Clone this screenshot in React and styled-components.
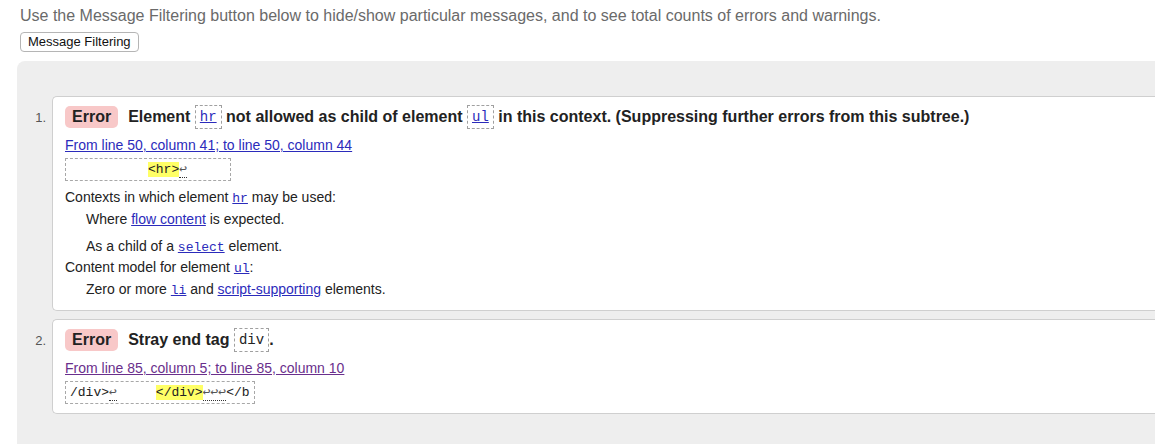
import React from 'react';
import styled, { createGlobalStyle } from 'styled-components';

const GlobalStyle = createGlobalStyle`
  html, body {
    margin: 0;
    padding: 0;
    background: #fff;
    font-family: "Liberation Sans", Arial, sans-serif;
    color: #222;
  }
`;

const Page = styled.div`
  padding: 7px 0 0 20px;
  height: 444px;
  overflow: hidden;
  box-sizing: border-box;
`;

const Intro = styled.p`
  margin: 0;
  font-size: 16px;
  line-height: 18px;
  color: #6a6a6a;
`;

const FilterButton = styled.button`
  margin-top: 7px;
  font-family: "Liberation Sans", Arial, sans-serif;
  font-size: 13px;
  line-height: 16px;
  color: #111;
  background: #fff;
  border: 1px solid #b5b5b5;
  border-radius: 4px;
  padding: 1px 7px 1px;
  display: block;
`;

const Panel = styled.div`
  margin: 9px 0 0 -3px;
  background: #eee;
  border-top-left-radius: 8px;
  padding: 35px 0 40px;
  min-height: 400px;
`;

const Messages = styled.ol`
  list-style: none;
  margin: 0;
  padding: 0;
`;

const Item = styled.li`
  display: flex;
  align-items: flex-start;
  margin-bottom: 8px;
`;

const Num = styled.span`
  width: 35px;
  box-sizing: border-box;
  padding: 14px 6px 0 0;
  text-align: right;
  font-size: 13px;
  line-height: 16px;
  color: #555;
  flex-shrink: 0;
`;

const Card = styled.div`
  flex: 1;
  background: #fff;
  border: 1px solid #cfcfcf;
  border-right: none;
  border-radius: 5px 0 0 5px;
  padding: 9px 12px ${(p) => p.$bottom}px;
`;

const Heading = styled.div`
  display: flex;
  align-items: center;
  height: 22px;
  font-size: 16px;
  font-weight: bold;
  color: #222;
  white-space: pre;
`;

const Badge = styled.span`
  background: #f8c8c8;
  border-radius: 5px;
  padding: 0 7px;
  height: 22px;
  line-height: 22px;
  margin-right: 10px;
`;

const Code = styled.code`
  font-family: "Liberation Mono", Consolas, monospace;
  font-weight: normal;
  font-size: 14px;
  line-height: 20px;
  border: 1px dashed #a0a0a0;
  padding: 1px 4px;
  color: #222;
`;

const CodeLink = styled.a`
  color: #2b2bbb;
  text-decoration: underline;
`;

const Location = styled.a`
  display: block;
  margin-top: 9px;
  font-size: 14px;
  line-height: 16px;
  color: ${(p) => (p.$visited ? '#6a2f8c' : '#2b2bbb')};
  text-decoration: underline;
`;

const Extract = styled.div`
  display: inline-block;
  margin-top: 5px;
  border: 1px dashed #a8a8a8;
  padding: 3px 4px;
  font-family: "Liberation Mono", Consolas, monospace;
  font-size: 13px;
  line-height: 15px;
  white-space: pre;
  color: #222;
`;

const Mark = styled.span`
  background: #ffff66;
`;

const Lf = styled.span`
  color: #555;
  border-bottom: 1px dotted #333;
`;

const Line = styled.div`
  font-size: 14px;
  line-height: 16px;
  height: 16px;
  color: #222;
  margin-top: ${(p) => p.$top}px;
  padding-left: ${(p) => (p.$indent ? 21 : 0)}px;
`;

const TextLink = styled.a`
  color: #2b2bbb;
  text-decoration: underline;
`;

const MonoLink = styled.a`
  font-family: "Liberation Mono", Consolas, monospace;
  font-size: 13px;
  line-height: 1;
  color: #2b2bbb;
  text-decoration: underline;
`;

export default function App() {
  return (
    <Page>
      <GlobalStyle />
      <Intro>
        Use the Message Filtering button below to hide/show particular messages, and to see total counts of errors and warnings.
      </Intro>
      <FilterButton>Message Filtering</FilterButton>
      <Panel>
        <Messages>
          <Item>
            <Num>1.</Num>
            <Card $bottom={13}>
              <Heading>
                <Badge>Error</Badge>
                {'Element '}<Code><CodeLink href="#">hr</CodeLink></Code>{' not allowed as child of element '}<Code><CodeLink href="#">ul</CodeLink></Code>{' in this context. (Suppressing further errors from this subtree.)'}
              </Heading>
              <Location href="#">From line 50, column 41; to line 50, column 44</Location>
              <Extract>{'          '}<Mark>{'<hr>'}</Mark><Lf>↩</Lf>{'     '}</Extract>
              <Line $top={8}>
                Contexts in which element <MonoLink href="#">hr</MonoLink> may be used:
              </Line>
              <Line $top={6} $indent>
                Where <TextLink href="#">flow content</TextLink> is expected.
              </Line>
              <Line $top={11} $indent>
                As a child of a <MonoLink href="#">select</MonoLink> element.
              </Line>
              <Line $top={5}>
                Content model for element <MonoLink href="#">ul</MonoLink>:
              </Line>
              <Line $top={6} $indent>
                Zero or more <MonoLink href="#">li</MonoLink> and <TextLink href="#">script-supporting</TextLink> elements.
              </Line>
            </Card>
          </Item>
          <Item>
            <Num>2.</Num>
            <Card $bottom={9}>
              <Heading>
                <Badge>Error</Badge>
                {'Stray end tag '}<Code>div</Code>.
              </Heading>
              <Location href="#" $visited>From line 85, column 5; to line 85, column 10</Location>
              <Extract>{'/div>'}<Lf>↩</Lf>{'     '}<Mark>{'</div>'}</Mark><Lf>↩↩↩</Lf>{'</b'}</Extract>
            </Card>
          </Item>
        </Messages>
      </Panel>
    </Page>
  );
}
